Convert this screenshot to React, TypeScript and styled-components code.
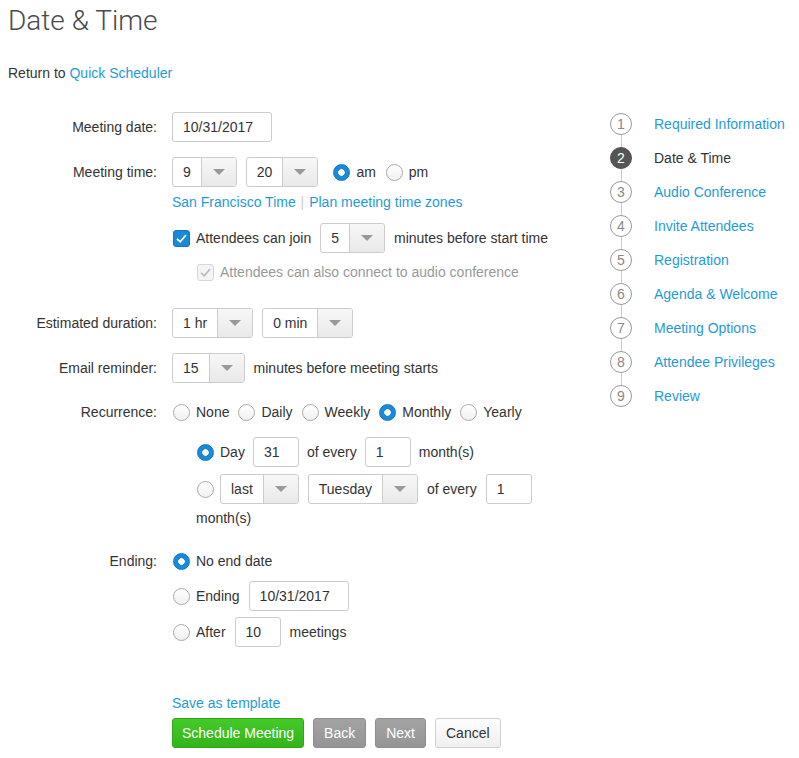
import React from "react";
import styled, { createGlobalStyle } from "styled-components";

const GlobalStyle = createGlobalStyle`
    html, body {
        margin: 0;
        padding: 0;
        background: #fff;
    }
    body {
        font-family: "Liberation Sans", Arial, sans-serif;
        font-size: 14px;
        color: #333;
    }
`;

const Page = styled.div`
    width: 799px;
    height: 758px;
    box-sizing: border-box;
    padding: 0 8px;
    display: flex;
    overflow: hidden;
`;

const Main = styled.div`
    width: 552px;
    display: flex;
    flex-direction: column;
`;

const Title = styled.h1`
    margin: 4px 0 0;
    font-family: Roboto, "Liberation Sans", sans-serif;
    font-weight: 300;
    font-size: 28px;
    line-height: 34px;
    color: #4a4a4a;
`;

const ReturnLine = styled.div`
    margin-top: 26px;
    line-height: 18px;
`;

const Link = styled.a`
    color: #1e9bd7;
    text-decoration: none;
    cursor: pointer;
`;

const Field = styled.div<{ $mt: number }>`
    display: grid;
    grid-template-columns: 149px 1fr;
    column-gap: 15px;
    margin-top: ${(p) => p.$mt}px;
`;

const Label = styled.div`
    text-align: right;
    line-height: 30px;
    white-space: nowrap;
`;

const Controls = styled.div`
    display: flex;
    flex-direction: column;
`;

const Line = styled.div<{ $mt?: number; $indent?: boolean; $short?: boolean; $gap?: number }>`
    display: flex;
    flex-wrap: wrap;
    align-items: center;
    column-gap: ${(p) => p.$gap ?? 9}px;
    row-gap: 6px;
    min-height: ${(p) => (p.$short ? 18 : 30)}px;
    margin-top: ${(p) => p.$mt ?? 0}px;
    padding-left: ${(p) => (p.$indent ? 24 : 0)}px;
    white-space: nowrap;
`;

const Muted = styled.span`
    color: #999;
`;

const Pipe = styled.span`
    color: #ccc;
    margin: 0 1px;
`;

const TextBox = styled.div<{ $w: number }>`
    width: ${(p) => p.$w}px;
    height: 30px;
    box-sizing: border-box;
    border: 1px solid #ccc;
    border-radius: 3px;
    padding: 0 10px;
    line-height: 28px;
    background: #fff;
`;

const SelectBox = styled.div`
    display: flex;
    height: 30px;
    box-sizing: border-box;
    border: 1px solid #ccc;
    border-radius: 3px;
    overflow: hidden;
    background: #fff;
`;

const SelectValue = styled.span`
    padding: 0 10px;
    line-height: 28px;
`;

const SelectArrow = styled.span`
    width: 34px;
    border-left: 1px solid #ccc;
    background: linear-gradient(#f7f7f7, #e9e9e9);
    display: flex;
    align-items: center;
    justify-content: center;
    &::after {
        content: "";
        border-left: 6px solid transparent;
        border-right: 6px solid transparent;
        border-top: 6px solid #999;
    }
`;

const Option = styled.label<{ $ml?: number }>`
    display: inline-flex;
    align-items: center;
    gap: 6px;
    margin-left: ${(p) => p.$ml ?? 0}px;
`;

const RadioMark = styled.span<{ $on?: boolean }>`
    width: 17px;
    height: 17px;
    margin-left: 1px;
    box-sizing: border-box;
    border-radius: 50%;
    border: 1px solid ${(p) => (p.$on ? "#1177c9" : "#aaa")};
    background: ${(p) =>
        p.$on ? "radial-gradient(circle, #fff 0 3px, #1a8ad8 3.5px)" : "linear-gradient(#fff, #f0f0f0)"};
`;

const LoneRadio = styled(RadioMark)`
    margin-right: -3px;
`;

const CheckMark = styled.span<{ $disabled?: boolean }>`
    width: 17px;
    height: 17px;
    margin-left: 1px;
    box-sizing: border-box;
    border-radius: 3px;
    border: 1px solid ${(p) => (p.$disabled ? "#d6d6d6" : "#1177c9")};
    background: ${(p) => (p.$disabled ? "#f4f4f4" : "#1a8ad8")};
    display: flex;
    align-items: center;
    justify-content: center;
`;

const SaveLine = styled.div`
    margin-top: 47px;
    padding-left: 164px;
    line-height: 18px;
`;

const Actions = styled.div`
    margin-top: 6px;
    display: flex;
    gap: 9px;
    padding-left: 164px;
`;

const Button = styled.button<{ $kind: "primary" | "grey" | "plain" }>`
    height: 30px;
    padding: 0 ${(p) => (p.$kind === "primary" ? 9 : 10)}px;
    border-radius: 3px;
    font-family: "Liberation Sans", Arial, sans-serif;
    font-size: 14px;
    cursor: pointer;
    border: 1px solid
        ${(p) => (p.$kind === "primary" ? "#2fa814" : p.$kind === "grey" ? "#8e8e8e" : "#cfcfcf")};
    color: ${(p) => (p.$kind === "plain" ? "#333" : "#fff")};
    background: ${(p) =>
        p.$kind === "primary"
            ? "linear-gradient(#45c92a, #33b51a)"
            : p.$kind === "grey"
            ? "linear-gradient(#a3a3a3, #959595)"
            : "linear-gradient(#fdfdfd, #f0f0f0)"};
`;

const Aside = styled.ol`
    list-style: none;
    margin: 113px 0 0 50px;
    padding: 0;
    display: flex;
    flex-direction: column;
    gap: 12px;
`;

const Step = styled.li`
    position: relative;
    display: flex;
    align-items: center;
    gap: 22px;
    height: 22px;
    &:not(:last-child)::after {
        content: "";
        position: absolute;
        left: 10.5px;
        top: 22px;
        width: 1px;
        height: 12px;
        background: #ccc;
    }
`;

const StepNum = styled.span<{ $active?: boolean }>`
    width: 22px;
    height: 22px;
    box-sizing: border-box;
    border-radius: 50%;
    border: 1.5px solid ${(p) => (p.$active ? "#555" : "#999")};
    background: ${(p) => (p.$active ? "#555" : "#fff")};
    color: ${(p) => (p.$active ? "#fff" : "#888")};
    font-size: 14px;
    display: flex;
    align-items: center;
    justify-content: center;
`;

const StepText = styled.span<{ $active?: boolean }>`
    color: ${(p) => (p.$active ? "#333" : "#1e9bd7")};
    white-space: nowrap;
`;

function Select({ value }: { value: string }) {
    return (
        <SelectBox>
            <SelectValue>{value}</SelectValue>
            <SelectArrow />
        </SelectBox>
    );
}

function Radio({ on, ml, children }: { on?: boolean; ml?: number; children: React.ReactNode }) {
    return (
        <Option $ml={ml}>
            <RadioMark $on={on} />
            {children}
        </Option>
    );
}

function Check({ disabled, children }: { disabled?: boolean; children: React.ReactNode }) {
    return (
        <Option>
            <CheckMark $disabled={disabled}>
                <svg width="13" height="13" viewBox="0 0 13 13">
                    <path
                        d="M2 6.8 L5.2 9.8 L11 3"
                        fill="none"
                        stroke={disabled ? "#bbb" : "#fff"}
                        strokeWidth="1.8"
                    />
                </svg>
            </CheckMark>
            {disabled ? <Muted>{children}</Muted> : children}
        </Option>
    );
}

const steps = [
    "Required Information",
    "Date & Time",
    "Audio Conference",
    "Invite Attendees",
    "Registration",
    "Agenda & Welcome",
    "Meeting Options",
    "Attendee Privileges",
    "Review",
];

function App() {
    return (
        <>
            <GlobalStyle />
            <Page>
                <Main>
                    <Title>Date &amp; Time</Title>
                    <ReturnLine>
                        Return to <Link>Quick Scheduler</Link>
                    </ReturnLine>

                    <Field $mt={30}>
                        <Label>Meeting date:</Label>
                        <Controls>
                            <Line>
                                <TextBox $w={100}>10/31/2017</TextBox>
                            </Line>
                        </Controls>
                    </Field>

                    <Field $mt={15}>
                        <Label>Meeting time:</Label>
                        <Controls>
                            <Line>
                                <Select value="9" />
                                <Select value="20" />
                                <Radio on ml={5}>
                                    am
                                </Radio>
                                <Radio>pm</Radio>
                            </Line>
                            <Line $mt={6} $short>
                                <span>
                                    <Link>San Francisco Time</Link> <Pipe>|</Pipe>{" "}
                                    <Link>Plan meeting time zones</Link>
                                </span>
                            </Line>
                            <Line $mt={12}>
                                <Check>Attendees can join</Check>
                                <Select value="5" />
                                <span>minutes before start time</span>
                            </Line>
                            <Line $mt={10} $indent $short>
                                <Check disabled>Attendees can also connect to audio conference</Check>
                            </Line>
                        </Controls>
                    </Field>

                    <Field $mt={27}>
                        <Label>Estimated duration:</Label>
                        <Controls>
                            <Line>
                                <Select value="1 hr" />
                                <Select value="0 min" />
                            </Line>
                        </Controls>
                    </Field>

                    <Field $mt={15}>
                        <Label>Email reminder:</Label>
                        <Controls>
                            <Line>
                                <Select value="15" />
                                <span>minutes before meeting starts</span>
                            </Line>
                        </Controls>
                    </Field>

                    <Field $mt={14}>
                        <Label>Recurrence:</Label>
                        <Controls>
                            <Line $gap={8}>
                                <Radio>None</Radio>
                                <Radio>Daily</Radio>
                                <Radio>Weekly</Radio>
                                <Radio on>Monthly</Radio>
                                <Radio>Yearly</Radio>
                            </Line>
                            <Line $mt={10} $indent $gap={8}>
                                <Radio on>Day</Radio>
                                <TextBox $w={46}>31</TextBox>
                                <span>of every</span>
                                <TextBox $w={46}>1</TextBox>
                                <span>month(s)</span>
                            </Line>
                            <Line $mt={7} $indent>
                                <LoneRadio />
                                <Select value="last" />
                                <Select value="Tuesday" />
                                <span>of every</span>
                                <TextBox $w={46}>1</TextBox>
                                <span>month(s)</span>
                            </Line>
                        </Controls>
                    </Field>

                    <Field $mt={20}>
                        <Label>Ending:</Label>
                        <Controls>
                            <Line>
                                <Radio on>No end date</Radio>
                            </Line>
                            <Line $mt={5}>
                                <Radio>Ending</Radio>
                                <TextBox $w={100}>10/31/2017</TextBox>
                            </Line>
                            <Line $mt={6}>
                                <Radio>After</Radio>
                                <TextBox $w={46}>10</TextBox>
                                <span>meetings</span>
                            </Line>
                        </Controls>
                    </Field>

                    <SaveLine>
                        <Link>Save as template</Link>
                    </SaveLine>
                    <Actions>
                        <Button $kind="primary">Schedule Meeting</Button>
                        <Button $kind="grey">Back</Button>
                        <Button $kind="grey">Next</Button>
                        <Button $kind="plain">Cancel</Button>
                    </Actions>
                </Main>

                <Aside>
                    {steps.map((s, i) => (
                        <Step key={s}>
                            <StepNum $active={i === 1}>{i + 1}</StepNum>
                            <StepText $active={i === 1}>{s}</StepText>
                        </Step>
                    ))}
                </Aside>
            </Page>
        </>
    );
}

export default App;
